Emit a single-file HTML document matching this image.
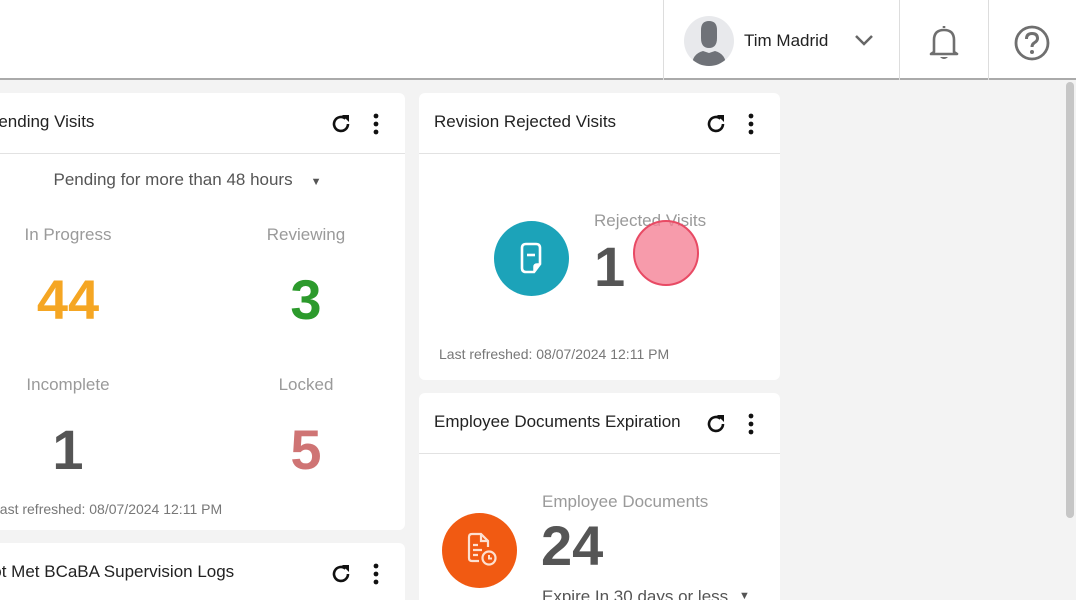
<!DOCTYPE html>
<html style="width:1076px;height:600px;overflow:hidden"><head><style>
*{margin:0;padding:0;box-sizing:border-box}
body{width:1076px;height:600px;overflow:hidden;background:#f3f3f3;font-family:"Liberation Sans",sans-serif;position:relative;color:#222}
.a{position:absolute}
.top{left:0;top:0;width:1076px;height:80px;background:#fff;border-bottom:2px solid #aaa}
.card{background:#fff;border-radius:6px;position:absolute;overflow:hidden}
.hd{position:absolute;left:0;right:0;top:0;height:61px;border-bottom:1px solid #e2e2e2}
.t{position:absolute;top:19px;font-size:17px;color:#222}
.lbl{position:absolute;font-size:17px;color:#9a9a9a;text-align:center}
.num{position:absolute;font-weight:bold;font-size:56px;text-align:center}
.ref{position:absolute;font-size:14px;color:#777}
</style></head><body>
<div class="a top"></div>
<div class="a" style="left:663px;top:0;width:1px;height:80px;background:#ddd"></div>
<div class="a" style="left:899px;top:0;width:1px;height:80px;background:#ddd"></div>
<div class="a" style="left:988px;top:0;width:1px;height:80px;background:#ddd"></div>
<div class="a" style="left:684px;top:16px;width:50px;height:50px;border-radius:50%;background:#e8e9ec;overflow:hidden">
<svg width="50" height="50" viewBox="0 0 50 50"><path d="M17 14 Q17 5 25 5 Q33 5 33 14 V22 Q33 32 25 32 Q17 32 17 22Z" fill="#6f7278"/><path d="M8 50 Q8 38 19 35 L25 37 L31 35 Q42 38 42 50Z" fill="#6f7278"/></svg></div>
<div class="a" style="left:744px;top:31px;font-size:17px;color:#222">Tim Madrid</div>
<svg class="a" style="left:853px;top:33px" width="22" height="14" viewBox="0 0 22 14"><path d="M3 3 L11 11 L19 3" fill="none" stroke="#666" stroke-width="2.5"/></svg>
<svg class="a" style="left:926px;top:22px" width="36" height="40" viewBox="0 0 36 40"><path d="M18 4 V6 M8 30 V18 Q8 8 18 8 Q28 8 28 18 V30 L31 32 H5 L8 30Z" fill="none" stroke="#6f6f6f" stroke-width="2.6" stroke-linejoin="round"/><path d="M14 35 Q18 39 22 35Z" fill="#6f6f6f"/></svg>
<svg class="a" style="left:1013px;top:24px" width="38" height="38" viewBox="0 0 38 38"><circle cx="19" cy="19" r="16" fill="none" stroke="#6f6f6f" stroke-width="2.8"/><path d="M13.5 15 Q13.5 9.5 19 9.5 Q24.5 9.5 24.5 14.5 Q24.5 17 21 19 Q19 20.5 19 23" fill="none" stroke="#6f6f6f" stroke-width="3"/><circle cx="19" cy="28" r="2" fill="#6f6f6f"/></svg>
<div class="a" style="left:1066px;top:82px;width:8px;height:436px;background:#c6c6c6;border-radius:4px"></div>

<!-- card 1 -->
<div class="card" style="left:-20px;top:93px;width:425px;height:437px">
<div class="hd"></div>
<div class="t" style="left:7px">Pending Visits</div>
<div class="lbl" style="left:0;width:425px;top:77px;color:#555"><span style="margin-left:-10px">Pending for more than 48 hours</span><span style="font-size:11px;margin-left:18px">▼</span></div>
<div class="lbl" style="left:0;width:176px;top:132px">In Progress</div>
<div class="lbl" style="left:260px;width:132px;top:132px">Reviewing</div>
<div class="num" style="left:0;width:176px;top:174px;color:#f5a623">44</div>
<div class="num" style="left:260px;width:132px;top:174px;color:#2c9a2c">3</div>
<div class="lbl" style="left:0;width:176px;top:282px">Incomplete</div>
<div class="lbl" style="left:260px;width:132px;top:282px">Locked</div>
<div class="num" style="left:0;width:176px;top:324px;color:#555">1</div>
<div class="num" style="left:260px;width:132px;top:324px;color:#cf7474">5</div>
<div class="ref" style="left:12px;top:408px">Last refreshed: 08/07/2024 12:11 PM</div>
</div>
<div class="card" style="left:-20px;top:543px;width:425px;height:80px">
<div class="hd"></div>
<div class="t" style="left:0">Not Met BCaBA Supervision Logs</div>
</div>

<!-- card 3 -->
<div class="card" style="left:419px;top:93px;width:361px;height:287px">
<div class="hd"></div>
<div class="t" style="left:15px">Revision Rejected Visits</div>
<div class="lbl" style="left:175px;top:118px">Rejected Visits</div>
<div class="a" style="left:75px;top:128px;width:75px;height:75px;border-radius:50%;background:#1ca3b9"></div>
<svg class="a" style="left:95px;top:147px" width="36" height="38" viewBox="0 0 36 38"><path d="M12 4 H22 Q26 4 26 8 V24 L20 32 H12 Q8 32 8 28 V8 Q8 4 12 4Z" fill="none" stroke="#fff" stroke-width="2.6"/><path d="M13 15 H21" stroke="#fff" stroke-width="2.6"/><path d="M20 32 V27 Q20 24 23 24 H26" fill="#fff" stroke="#fff" stroke-width="1.5"/></svg>
<div class="num" style="left:175px;top:141px;color:#555">1</div>
<div class="a" style="left:214px;top:127px;width:66px;height:66px;border-radius:50%;background:rgba(245,130,150,.8);border:2px solid #e84a64"></div>
<div class="ref" style="left:20px;top:253px">Last refreshed: 08/07/2024 12:11 PM</div>
</div>

<!-- card 4 -->
<div class="card" style="left:419px;top:393px;width:361px;height:230px">
<div class="hd"></div>
<div class="t" style="left:15px">Employee Documents Expiration</div>
<div class="lbl" style="left:123px;top:99px">Employee Documents</div>
<div class="a" style="left:23px;top:120px;width:75px;height:75px;border-radius:50%;background:#f15a12"></div>
<svg class="a" style="left:43px;top:138px" width="40" height="40" viewBox="0 0 40 40"><path d="M17 30 H10 Q7 30 7 27 V6 Q7 3 10 3 H19 L26 10 V16" fill="none" stroke="#fde0d0" stroke-width="2.2"/><path d="M19 3 V10 H26" fill="none" stroke="#fde0d0" stroke-width="2.2"/><path d="M11 14 H16 M11 19 H20 M11 24 H16" stroke="#fde0d0" stroke-width="2.2"/><circle cx="27" cy="27" r="6.5" fill="none" stroke="#fde0d0" stroke-width="2.2"/><path d="M27 24 V27.5 H30" fill="none" stroke="#fde0d0" stroke-width="2"/></svg>
<div class="num" style="left:122px;top:120px;color:#555">24</div>
<div class="lbl" style="left:123px;top:194px;color:#555">Expire In 30 days or less</div>
<div class="a" style="left:320px;top:197px;font-size:11px;color:#555">▼</div>
</div>

<!-- header icons -->
<svg class="a" style="left:329px;top:112px" width="24" height="24" viewBox="0 0 24 24"><path d="M19 12 A7 7 0 1 1 16.5 6.6" fill="none" stroke="#111" stroke-width="2.6"/><path d="M13 3 H20 V10Z" fill="#111"/></svg>
<svg class="a" style="left:368px;top:112px" width="16" height="24"><circle cx="8" cy="4" r="2.4" fill="#111"/><circle cx="8" cy="12" r="2.4" fill="#111"/><circle cx="8" cy="20" r="2.4" fill="#111"/></svg>
<svg class="a" style="left:704px;top:112px" width="24" height="24" viewBox="0 0 24 24"><path d="M19 12 A7 7 0 1 1 16.5 6.6" fill="none" stroke="#111" stroke-width="2.6"/><path d="M13 3 H20 V10Z" fill="#111"/></svg>
<svg class="a" style="left:743px;top:112px" width="16" height="24"><circle cx="8" cy="4" r="2.4" fill="#111"/><circle cx="8" cy="12" r="2.4" fill="#111"/><circle cx="8" cy="20" r="2.4" fill="#111"/></svg>
<svg class="a" style="left:704px;top:412px" width="24" height="24" viewBox="0 0 24 24"><path d="M19 12 A7 7 0 1 1 16.5 6.6" fill="none" stroke="#111" stroke-width="2.6"/><path d="M13 3 H20 V10Z" fill="#111"/></svg>
<svg class="a" style="left:743px;top:412px" width="16" height="24"><circle cx="8" cy="4" r="2.4" fill="#111"/><circle cx="8" cy="12" r="2.4" fill="#111"/><circle cx="8" cy="20" r="2.4" fill="#111"/></svg>
<svg class="a" style="left:329px;top:562px" width="24" height="24" viewBox="0 0 24 24"><path d="M19 12 A7 7 0 1 1 16.5 6.6" fill="none" stroke="#111" stroke-width="2.6"/><path d="M13 3 H20 V10Z" fill="#111"/></svg>
<svg class="a" style="left:368px;top:562px" width="16" height="24"><circle cx="8" cy="4" r="2.4" fill="#111"/><circle cx="8" cy="12" r="2.4" fill="#111"/><circle cx="8" cy="20" r="2.4" fill="#111"/></svg>
</body></html>
